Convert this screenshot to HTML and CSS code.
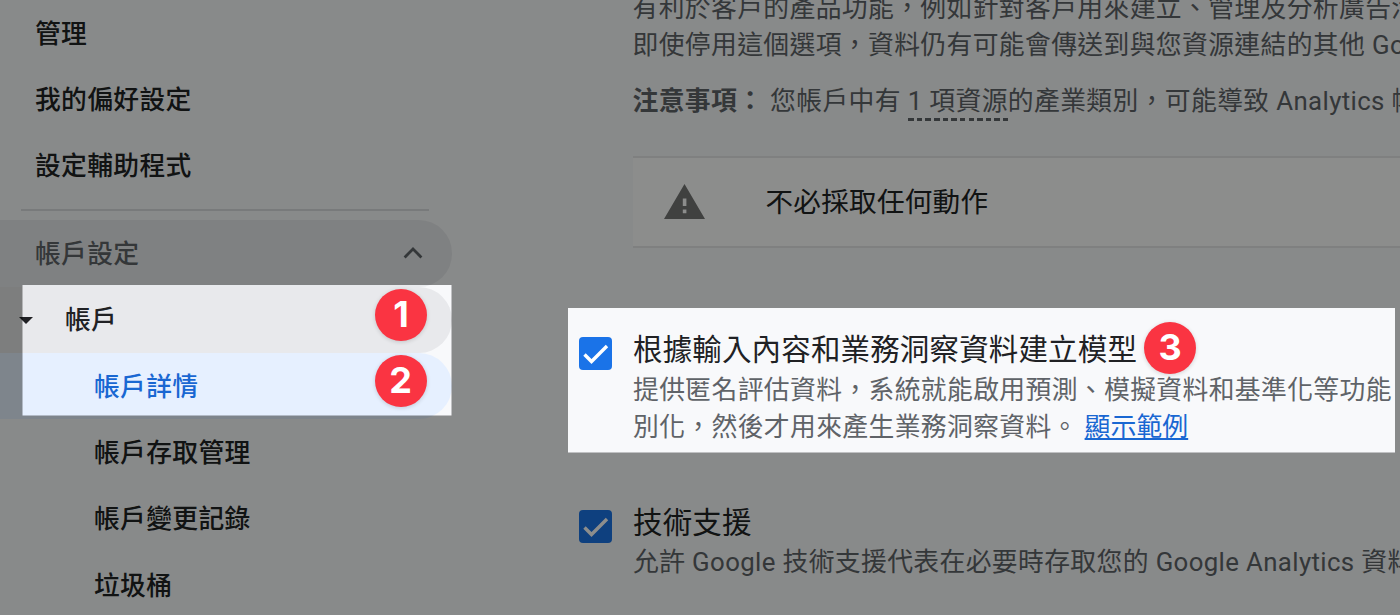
FILE: index.html
```html
<!DOCTYPE html>
<html lang="zh-Hant">
<head>
<meta charset="utf-8">
<title>帳戶詳情</title>
<link rel="stylesheet" href="styles.css">
</head>
<body>
<div class="page">
  <nav class="sidebar">
    <a class="item">管理</a>
    <a class="item">我的偏好設定</a>
    <a class="item">設定輔助程式</a>
    <hr class="rule">
    <div class="group">
      <a class="item section">帳戶設定
        <svg class="chevron" width="20" height="13" viewBox="0 0 20 13"><path d="M1.6 11.4 10 3l8.4 8.4" fill="none" stroke="#5f6368" stroke-width="2.8"/></svg>
      </a>
      <a class="item parent"><svg class="caret" width="14" height="7" viewBox="0 0 14 7"><path d="M0 0h14L7 7z" fill="#202124"/></svg>帳戶</a>
      <a class="item child active">帳戶詳情</a>
      <a class="item child">帳戶存取管理</a>
      <a class="item child">帳戶變更記錄</a>
      <a class="item child">垃圾桶</a>
    </div>
  </nav>
  <main class="content">
    <div class="intro">
      <p class="desc">有利於客戶的產品功能，例如針對客戶用來建立、管理及分析廣告活動</p>
      <p class="desc">即使停用這個選項，資料仍有可能會傳送到與您資源連結的其他 Google</p>
      <p class="desc note"><b>注意事項：</b> 您帳戶中有 <span class="dashed">1 項資源</span>的產業類別，可能導致 Analytics 帳戶</p>
    </div>
    <div class="notice">
      <svg class="warn" width="41" height="35" viewBox="0 0 41 35"><path fill="#757575" fill-rule="evenodd" d="M20.5 0 41 35H0zM18.8 14.5v7.4h3.6v-7.4zm0 11v3.8h3.6v-3.8z"/></svg>
      <span class="notice-text">不必採取任何動作</span>
    </div>
    <section class="option first">
      <span class="check"><svg width="33" height="33" viewBox="0 0 33 33"><path d="m5.5 17.5 7 7L28 9" fill="none" stroke="#fff" stroke-width="3.4"/></svg></span>
      <div class="option-text">
        <h2 class="title">根據輸入內容和業務洞察資料建立模型</h2>
        <p class="desc">提供匿名評估資料，系統就能啟用預測、模擬資料和基準化等功能</p>
        <p class="desc">別化，然後才用來產生業務洞察資料。 <a class="link">顯示範例</a></p>
      </div>
    </section>
    <section class="option second">
      <span class="check"><svg width="33" height="33" viewBox="0 0 33 33"><path d="m5.5 17.5 7 7L28 9" fill="none" stroke="#fff" stroke-width="3.4"/></svg></span>
      <div class="option-text">
        <h2 class="title">技術支援</h2>
        <p class="desc">允許 Google 技術支援代表在必要時存取您的 Google Analytics 資料</p>
      </div>
    </section>
  </main>
  <div class="dim"></div>
  <span class="badge one">1</span>
  <span class="badge two">2</span>
  <span class="badge three">3</span>
</div>
</body>
</html>
```

FILE: styles.css
```css
* { box-sizing: border-box; }
body { margin: 0; font-family: Roboto, "Noto Sans CJK TC", sans-serif; }
.page {
  position: relative;
  display: flex;
  width: 1400px;
  height: 615px;
  overflow: hidden;
  background: #f8f9fb;
}
.sidebar { width: 452px; flex: none; }
.item {
  display: flex;
  align-items: center;
  height: 66.4px;
  padding-bottom: 4px;
  padding-left: 35px;
  border-radius: 0 33px 33px 0;
  color: #202124;
  font-size: 25.75px;
  font-weight: 500;
  letter-spacing: .35px;
  white-space: nowrap;
}
.rule {
  width: 408px;
  height: 2px;
  margin: 10px 0 9px 21px;
  border: 0;
  background: #dadce0;
}
.section { justify-content: space-between; padding-right: 29px; background: #e8eaed; color: #5f6368; }
.chevron { margin-top: 3px; }
.parent { padding-left: 19px; background: linear-gradient(90deg, #e3e4e5 22px, #e8e9ec 22px); }
.caret { margin: 5px 32px 0 0; }
.child { padding-left: 94px; }
.active { background: #e6f0ff; color: #1967d2; }
.content { flex: 1; min-width: 0; padding-left: 127px; }
.intro, .notice { margin-left: 53.5px; }
.intro { height: 155px; margin-top: -10px; }
.desc {
  margin: 0;
  color: #5f6368;
  font-size: 25.8px;
  line-height: 37px;
  letter-spacing: .37px;
  white-space: nowrap;
}
.note { margin-top: 18.5px; }
.dashed {
  padding-bottom: 5px;
  background: repeating-linear-gradient(90deg, #5f6368 0 5.6px, transparent 5.6px 8.65px) left bottom / 100% 3px no-repeat;
}
.notice {
  display: flex;
  align-items: center;
  height: 92px;
  margin-top: 11px;
  padding: 0 0 2px 31px;
  border: solid #e8e8ea;
  border-width: 2px 0;
  background: #fff;
}
.notice-text { margin: -3px 0 0 61px; color: #202124; font-size: 27.6px; letter-spacing: .25px; white-space: nowrap; }
.option { display: flex; }
.first { margin-top: 81px; }
.second { margin-top: 56px; }
.check { width: 33px; height: 33px; margin: 8px 21px 0 0; border-radius: 4px; background: #1a73e8; flex: none; }
.first .check { margin-top: 7.5px; }
.check svg { display: block; }
.title { margin: 0; color: #202124; font-size: 29.5px; font-weight: 400; line-height: 43px; letter-spacing: .15px; white-space: nowrap; }
.second .title { line-height: 42px; }
.link { letter-spacing: .1px; color: #1967d2; text-decoration: underline; text-decoration-thickness: 2px; text-underline-offset: 2px; text-decoration-skip-ink: none; }
.dim {
  position: absolute;
  inset: 0;
  background: rgba(0, 2, 0, .45);
  clip-path: polygon(evenodd, 0 0, 1400px 0, 1400px 615px, 0 615px, 0 0, 22.5px 285px, 451.5px 285px, 451.5px 415.5px, 22.5px 415.5px, 22.5px 285px, 0 0, 568px 308px, 1395px 308px, 1395px 452.5px, 568px 452.5px, 568px 308px, 0 0);
}
.badge {
  position: absolute;
  width: 52px;
  height: 52px;
  border-radius: 50%;
  background: #fa3442;
  box-shadow: 0 1px 4px rgba(0, 0, 0, .16);
  color: #fff;
  font: 700 36px/51px Inter, sans-serif;
  text-align: center;
}
.one { left: 375px; top: 288.5px; }
.two { left: 374.5px; top: 355px; }
.three { left: 1144px; top: 322px; }
```
